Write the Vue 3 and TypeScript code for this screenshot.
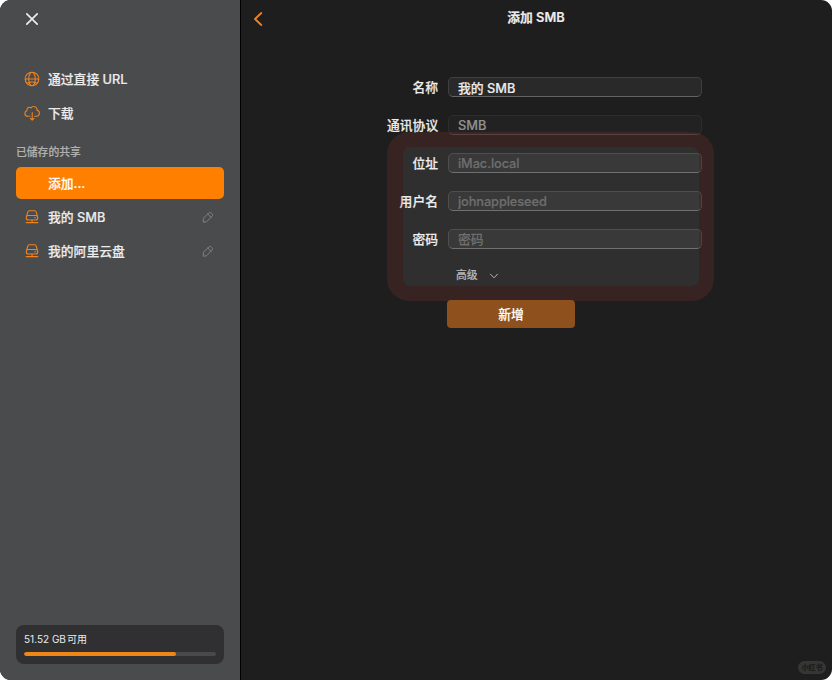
<script setup lang="ts">
interface Share {
  name: string
}
interface Field {
  label: string
  value: string
  placeholder: string
  disabled?: boolean
}

const shares: Share[] = [{ name: '我的 SMB' }, { name: '我的阿里云盘' }]
const fields: Field[] = [
  { label: '名称', value: '我的 SMB', placeholder: '' },
  { label: '通讯协议', value: 'SMB', placeholder: '', disabled: true },
  { label: '位址', value: '', placeholder: 'iMac.local' },
  { label: '用户名', value: '', placeholder: 'johnappleseed' },
  { label: '密码', value: '', placeholder: '密码' },
]
const usedPercent = 79
</script>

<template>
  <div class="window">
    <aside class="sidebar">
      <svg class="close" viewBox="0 0 16 16"><path d="M2.8 2.8 13.2 13.2M13.2 2.8 2.8 13.2" /></svg>
      <nav class="nav">
        <div class="item">
          <svg class="icon" viewBox="0 0 16 16">
            <circle cx="8" cy="8" r="6.8" />
            <ellipse cx="8" cy="8" rx="3.3" ry="6.8" />
            <path d="M1.200 8h13.600M3.400 12.200c2.600-1.300 6.600-1.300 9.200 0" />
          </svg>
          <span class="name">通过直接 URL</span>
        </div>
        <div class="item">
          <svg class="icon" viewBox="0 0 16 16">
            <path d="M5.800 11.200H4C2.200 11.200.9 10 .9 8.400c0-1.300.8-2.300 2-2.600C2.700 3.700 3.800 2.300 5.300 2.300c.7 0 1.200.2 1.700.6C7.700 1.800 8.700 1.400 9.700 1.500c2 .1 3.300 1.700 3.300 3.600 1.500.4 2.400 1.500 2.400 2.900 0 1.700-1.300 3.200-3.100 3.200h-1.600" />
            <path d="M8.200 7.500v7.500M6.400 13.300l1.800 1.800 1.800-1.800" />
          </svg>
          <span class="name">下载</span>
        </div>
        <div class="section">已储存的共享</div>
        <div class="item selected"><span class="name">添加...</span></div>
        <div v-for="share in shares" :key="share.name" class="item">
          <svg class="icon" viewBox="0 0 16 16">
            <path d="M2.700 7 3.700 3.300c.3-1.100.8-1.500 1.700-1.500h5.200c.9 0 1.400.4 1.700 1.500l1 3.700" />
            <rect x="2.300" y="6.500" width="11.400" height="4.500" rx="2" />
            <path d="M8 11v2.600M2.200 13.600h11.600M10.700 8.700h.8" />
          </svg>
          <span class="name">{{ share.name }}</span>
          <svg class="edit" viewBox="0 0 12 12">
            <path d="M1.200 10.800 1.500 7.200 7 1.700c1.300-1.300 4.600 1.900 3.300 3.300L4.800 10.500ZM6 2.700c.4 1.500 1.700 2.900 3.300 3.300" />
          </svg>
        </div>
      </nav>
      <div class="storage">
        <div class="free">51.52 GB<span>可用</span></div>
        <div class="track"><div class="used" :style="{ width: usedPercent + '%' }"></div></div>
      </div>
    </aside>
    <main class="main">
      <header class="header">
        <svg class="back" viewBox="0 0 12 16"><path d="M9.300 2 3 8l6.300 6" /></svg>
        <h1>添加 SMB</h1>
      </header>
      <form class="form" @submit.prevent>
        <label v-for="field in fields" :key="field.label" class="row">
          <span class="label">{{ field.label }}</span>
          <input type="text" :value="field.value" :placeholder="field.placeholder" :disabled="field.disabled" />
        </label>
        <div class="advanced">
          高级
          <svg viewBox="0 0 10 10"><path d="M1.500 3.200 5 6.800l3.500-3.600" /></svg>
        </div>
        <button class="submit" type="button">新增</button>
        <div class="highlight"></div>
      </form>
      <div class="badge">小红书</div>
    </main>
  </div>
</template>

<style>
body {
  background: #fff;
}
</style>

<style scoped>
.window {
  display: flex;
  width: 832px;
  height: 680px;
  overflow: hidden;
  border-radius: 11px;
  background: #1e1e1e;
  color: #ececec;
  font: 500 12.8px/20px Inter, "Noto Sans CJK SC", sans-serif;
  -webkit-text-stroke: .18px currentColor;
}
svg {
  display: block;
  flex: none;
  fill: none;
  stroke: currentColor;
  stroke-linecap: round;
  stroke-linejoin: round;
}
.sidebar {
  box-sizing: border-box;
  display: flex;
  flex-direction: column;
  width: 241px;
  padding: 11px 16px 16px;
  background: #4a4b4c;
  border-right: 1px solid #000;
}
.close {
  width: 16px;
  height: 16px;
  margin-left: 8px;
  stroke-width: 1.700;
}
.nav {
  display: flex;
  flex-direction: column;
  gap: 2px;
  margin-top: 36px;
}
.item {
  display: flex;
  align-items: center;
  height: 32px;
  padding: 0 10px 0 8px;
  border-radius: 5px;
}
.icon {
  width: 16px;
  height: 16px;
  margin-right: 8px;
  color: #ee8420;
  stroke-width: 1.100;
}
.name {
  flex: 1;
  padding-top: 2px;
}
.selected {
  padding-left: 32px;
  background: #ff8000;
  color: #fff;
}
.section {
  box-sizing: border-box;
  height: 20px;
  margin: 11px 0 3px;
  padding-top: 1px;
  color: #b0b0b1;
  font-size: 10.800px;
}
.edit {
  width: 12px;
  height: 12px;
  color: #888;
  stroke-width: .9;
}
.storage {
  box-sizing: border-box;
  height: 39px;
  margin-top: auto;
  padding: 5px 8px;
  border-radius: 8px;
  background: #303032;
}
.free {
  font-size: 10px;
  font-weight: 400;
  line-height: 18px;
  -webkit-text-stroke: 0;
}
.free span {
  margin-left: 1px;
}
.track {
  height: 4px;
  margin-top: 4px;
  border-radius: 2px;
  background: #49494a;
  overflow: hidden;
}
.used {
  height: 100%;
  border-radius: 2px;
  background: #f08518;
}
.main {
  display: flex;
  flex: 1;
  flex-direction: column;
}
.header {
  display: grid;
  grid-template-columns: 34px 1fr 35px;
  align-items: center;
  height: 35px;
}
.header h1 {
  margin: 0;
  font-size: 12.800px;
  font-weight: 600;
  text-align: center;
}
.back {
  width: 12px;
  height: 16px;
  margin: 3px 0 0 11px;
  color: #ee8420;
  stroke-width: 1.800;
}
.form {
  position: relative;
  display: flex;
  flex-direction: column;
  gap: 18px;
  width: 327px;
  margin: 42px 0 0 146px;
}
.row {
  display: grid;
  grid-template-columns: 51px 254px;
  column-gap: 10px;
  height: 20px;
}
.label {
  padding-top: 1px;
  text-align: right;
  white-space: nowrap;
}
input {
  box-sizing: border-box;
  width: 254px;
  height: 20px;
  margin: 0;
  padding: 1px 9px 0;
  border: 1px solid #404040;
  border-bottom-color: #646464;
  border-radius: 5px;
  outline: none;
  background: #292929;
  color: #ececec;
  font: inherit;
  line-height: 17px;
  -webkit-text-stroke: inherit;
}
input::placeholder {
  color: #626262;
  opacity: 1;
  letter-spacing: -.1px;
}
input:disabled {
  border-color: #2d2d2d;
  border-bottom-color: #444;
  background: #222;
  color: #919191;
}
.advanced {
  display: flex;
  align-items: center;
  gap: 11px;
  height: 20px;
  margin: -1px 0 -4px 69px;
  color: #b0b0b0;
  font-size: 10.800px;
}
.advanced svg {
  width: 10px;
  height: 10px;
}
.submit {
  position: relative;
  z-index: 1;
  width: 128px;
  height: 28px;
  margin-left: 60px;
  padding: 2px 0 0;
  border: 0;
  border-radius: 4px;
  background: #8e511d;
  color: #fff;
  font: inherit;
  -webkit-text-stroke: inherit;
}
.highlight {
  position: absolute;
  top: 55px;
  left: 0;
  box-sizing: border-box;
  width: 327px;
  height: 169px;
  border: 15px solid rgba(180, 62, 55, .16);
  border-left-width: 16px;
  border-radius: 22px;
  background: rgba(255, 255, 255, .08);
  background-clip: padding-box;
  pointer-events: none;
}
.badge {
  width: 28px;
  height: 13px;
  margin: auto 6px 6px auto;
  border-radius: 7px;
  background: #363636;
  color: #1c1c1c;
  font-size: 7px;
  font-weight: 700;
  line-height: 13px;
  text-align: center;
}
</style>
